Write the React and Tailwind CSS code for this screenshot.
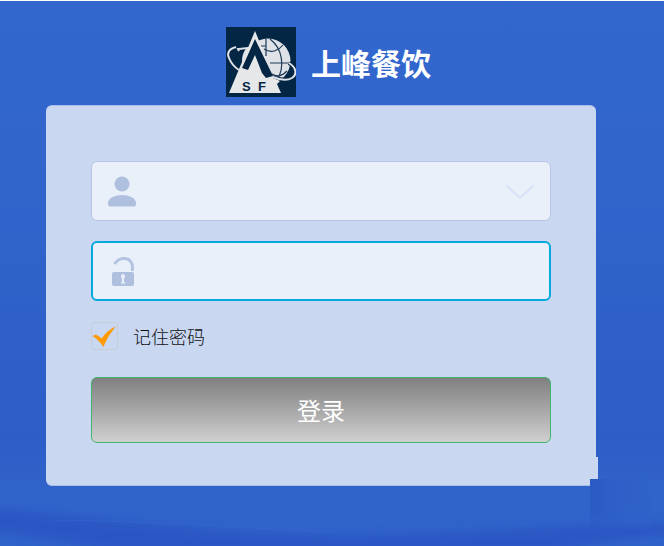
import React, { useState } from 'react';

const Background = () => (
  <svg
    className="absolute inset-0 h-full w-full"
    viewBox="0 0 664 546"
    preserveAspectRatio="none"
    aria-hidden="true"
  >
    <defs>
      <linearGradient id="sky" x1="0" y1="0" x2="0" y2="1">
        <stop offset="0" stopColor="#3267ce" />
        <stop offset="0.3" stopColor="#3165cc" />
        <stop offset="0.6" stopColor="#2f60c9" />
        <stop offset="0.8" stopColor="#2d5dc7" />
        <stop offset="0.91" stopColor="#3164cb" />
        <stop offset="1" stopColor="#3063ca" />
      </linearGradient>
      <filter id="soft" x="-10%" y="-50%" width="120%" height="200%">
        <feGaussianBlur stdDeviation="5" />
      </filter>
    </defs>
    <rect width="664" height="546" fill="url(#sky)" />
    <g filter="url(#soft)">
      <path d="M-20 506 C100 518 200 532 330 535 C440 536 560 524 690 522 V534 C640 536 580 544 540 560 H140 C90 546 40 536 -20 532 Z" fill="#2957c4" />
    </g>
    <path d="M50 520 C150 521 240 528 340 532" fill="none" stroke="#396dd1" strokeOpacity="0.4" />
  </svg>
);

const Logo = () => (
  <svg className="h-[70px] w-[70px] shrink-0" viewBox="0 0 70 70" role="img" aria-label="SF">
    <rect width="70" height="70" fill="#032645" />
    <circle cx="42" cy="34" r="22.500" fill="#dfe2e6" />
    <path d="M19 0 H29 L12 52 H0 V34 H18 V20 H12 Z" fill="#032645" />
    <path d="M22 20 C18 23 16 28 16 34 L18 38 L24 20 Z" fill="#dfe2e6" />
    <g fill="none" stroke="#1c3854" strokeWidth="1.200">
      <path d="M40 12 V29 M34 19 H40 M44 36 H64" />
      <path d="M44 12 C57 22 59 40 51 53" />
      <path d="M38 22 C46 27 53 23 57 18" />
      <path d="M46 47 C52 51 57 48 61 44" />
    </g>
    <path d="M22 21 L12 22 L13 24 M10 20 C2 22 1 27 3 31 C5 36 8 40 13 43" fill="none" stroke="#dfe2e6" strokeWidth="2" />
    <path d="M63 36 C71 41 71 48 66 51 C61 54 54 53 47 50" fill="none" stroke="#032645" strokeWidth="4" />
    <path d="M63 36 C71 41 71 48 66 51 C61 54 54 53 47 50" fill="none" stroke="#dfe2e6" strokeWidth="2" />
    <path d="M29 4 L34 16 L47 51 L54 54 L51 57 L55 66 H3 Z" fill="#e6e7e9" />
    <path d="M29 12 L47 49 L40 51 L36 46 L29 28 L22 43 L16 41 Z" fill="#032645" />
    <g fill="#032645" fontFamily="Liberation Sans, Arial, sans-serif" fontSize="13" fontWeight="bold">
      <text x="16" y="64">S</text>
      <text x="32" y="64">F</text>
    </g>
  </svg>
);

const UserIcon = () => (
  <svg className="h-8 w-8 shrink-0" viewBox="0 0 32 32" fill="#afbfde" aria-hidden="true">
    <circle cx="16" cy="9" r="7.500" />
    <path d="M2 28 C2 23 9 20 16 20 C23 20 30 23 30 28 V29 Q30 31.500 28 31.500 H4 Q2 31.500 2 29 Z" />
  </svg>
);

const LockIcon = () => (
  <svg className="h-8 w-8 shrink-0" viewBox="0 0 32 32" aria-hidden="true">
    <path d="M8.500 9 C13 1 26.500 1 26.500 13 V16" fill="none" stroke="#b4c3e1" strokeWidth="3" />
    <rect x="6" y="17" width="22" height="14" rx="2" fill="#afbfde" />
    <path d="M15 21 Q15 19 17 19 Q19 19 19 21 Q19 23 18 23.500 V26.500 L19.500 28.500 H14.500 L16 26.500 V23.500 Q15 23 15 21 Z" fill="#eaf0fa" />
  </svg>
);

const App = () => {
  const [user, setUser] = useState('');
  const [password, setPassword] = useState('');
  const [remember, setRemember] = useState(true);

  return (
    <div className="relative min-h-screen overflow-hidden border-t border-white bg-[#3064ca] pr-[68px] pl-[46px] font-['Noto_Sans_CJK_SC',sans-serif]">
      <Background />

      <main className="relative">
        <header className="flex items-center justify-center gap-[15px] pt-[26px] pb-2 pl-[15px]">
          <Logo />
          <h1 className="text-[30px] leading-10 font-bold text-white">上峰餐饮</h1>
        </header>

        <div className="relative">
          <form
            className="rounded-md border-y border-[#a9bfe9] bg-[#c9d7f1] px-[45px] pt-[55px] pb-[42px]"
            onSubmit={(e) => e.preventDefault()}
          >
            <div className="relative flex h-[60px] items-center rounded-md border border-[#b5c5e6] bg-[#eaf0fa] pl-[14px]">
              <UserIcon />
              <select
                aria-label="用户名"
                value={user}
                onChange={(e) => setUser(e.target.value)}
                className="h-full min-w-0 flex-1 appearance-none bg-transparent px-4 text-lg outline-none"
              >
                <option value=""></option>
              </select>
              <svg
                className="pointer-events-none absolute right-[14px] h-4 w-8"
                viewBox="0 0 32 16"
                fill="none"
                stroke="#d7e2f8"
                strokeWidth="2"
                aria-hidden="true"
              >
                <path d="M2 2 L16 15 L30 2" />
              </svg>
            </div>

            <div className="mt-5 flex h-[60px] items-center rounded-md border-2 border-[#06a9dc] bg-[#eaf0fa] pl-[13px]">
              <LockIcon />
              <input
                type="password"
                aria-label="密码"
                value={password}
                onChange={(e) => setPassword(e.target.value)}
                className="h-full min-w-0 flex-1 bg-transparent px-4 text-lg outline-none"
              />
            </div>

            <label className="mt-[21px] flex h-7 items-center gap-[15px] text-lg leading-7 font-light text-[#111]">
              <span className="relative h-7 w-[27px]">
                <input
                  type="checkbox"
                  checked={remember}
                  onChange={(e) => setRemember(e.target.checked)}
                  className="block h-7 w-[27px] appearance-none rounded-sm border border-[#c8cdd6]"
                />
                {remember && (
                  <svg className="pointer-events-none absolute inset-0 h-full w-full" viewBox="0 0 27 28" aria-hidden="true">
                    <path d="M1.500 14 L5 12.500 L11 16.500 C14 11 18 8 24.500 4.500 C20 11 16 16 12.500 25 C9 20 6 17 1.500 14 Z" fill="#ff9a05" />
                  </svg>
                )}
              </span>
              记住密码
            </label>

            <button
              type="submit"
              className="mt-[27px] h-[66px] w-full rounded-md border border-[#41b56d] bg-linear-to-b from-[#808080] to-[#d0d0d0] text-2xl text-white"
            >
              登录
            </button>
          </form>

          {/* corner patch hanging over the card's lower right edge */}
          <div className="absolute -right-[2px] bottom-[7px] h-[22px] w-2 bg-[#c9d7f1]"></div>
          <div className="absolute -right-[56px] -bottom-[46px] h-[53px] w-[62px] bg-linear-to-r from-[#2b59c5] via-[#2f60c9] to-[#3063ca] mask-b-from-60%"></div>
        </div>
      </main>
    </div>
  );
};

export default App;
